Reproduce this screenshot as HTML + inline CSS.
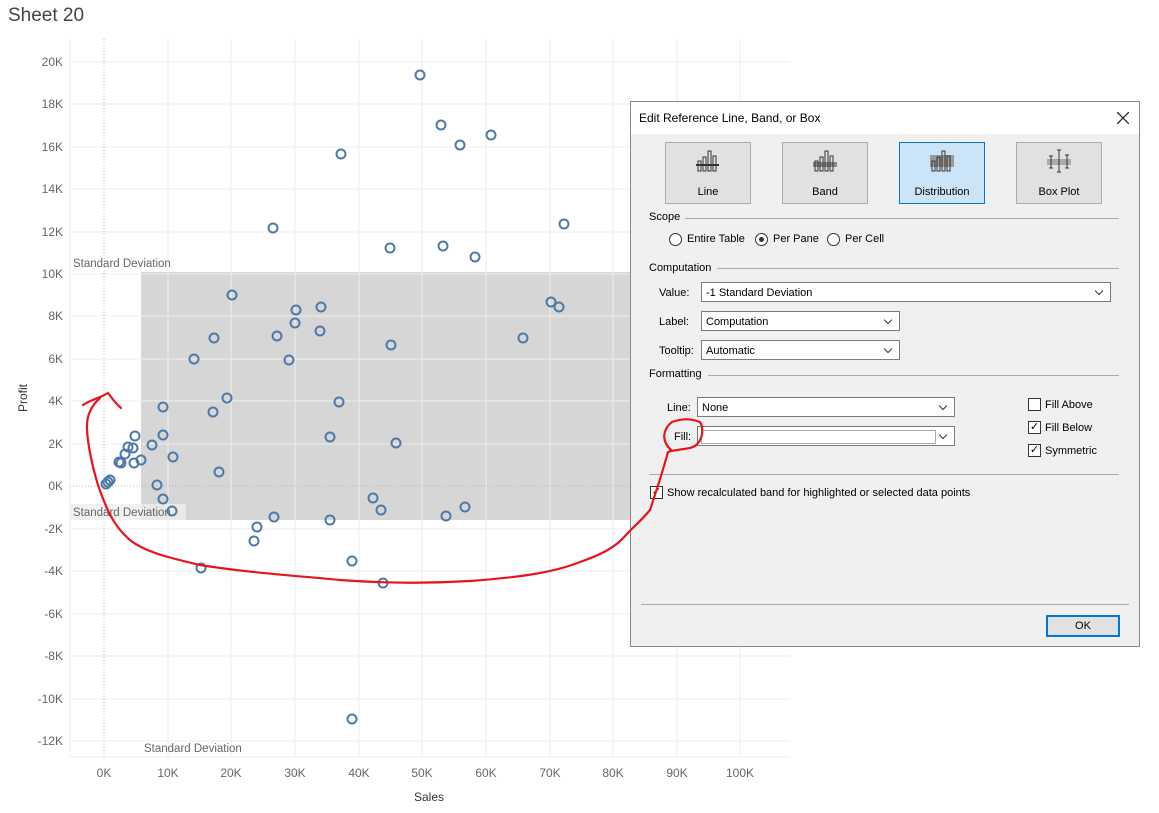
<!DOCTYPE html>
<html><head><meta charset="utf-8"><style>
body{margin:0;width:1159px;height:813px;background:#fff;overflow:hidden;position:relative;font-family:"Liberation Sans",sans-serif}
.t{position:absolute;left:8px;top:5px;font-size:19px;color:#444}
.dlg{position:absolute;left:630px;top:101px;width:508px;height:544px;background:#f0f0f0;border:1px solid #888;font-size:11px;color:#000}
.tb{height:32px;background:#fff;line-height:32px;padding-left:8px;font-size:12px;position:relative}
.x{position:absolute;right:10px;top:10px}
.btn{position:absolute;top:40px;width:84px;height:60px;background:#e1e1e1;border:1px solid #adadad;text-align:center;font-size:11px}
.btn.s{background:#cce4f7;border-color:#0078d7}
.btn span{position:absolute;left:0;right:0;top:43px}
.sec{position:absolute;left:18px;font-size:11px}
.hr{position:absolute;height:1px;background:#aaa}
.lab{position:absolute;font-size:11px}
.sel{position:absolute;background:#fff;border:1px solid #7a7a7a;height:20px;line-height:20px;padding-left:4px;box-sizing:border-box;font-size:11px}
.sel:after{content:"";position:absolute;right:8px;top:5px;width:5px;height:5px;border-right:1px solid #333;border-bottom:1px solid #333;transform:rotate(45deg)}
.rad{position:absolute;width:11px;height:11px;border:1px solid #333;border-radius:50%;background:#fff}
.cb{position:absolute;width:11px;height:11px;border:1px solid #333;background:#fff;font-size:11px;line-height:11px;text-align:center}
</style></head><body>
<div class="t">Sheet 20</div>
<svg width="1159" height="813" style="position:absolute;left:0;top:0" font-family="Liberation Sans, sans-serif">
<rect x="141" y="272" width="500" height="248" fill="#d6d6d6"/>
<g stroke="#eee" stroke-width="1">
<line x1="70" y1="62" x2="790" y2="62"/><line x1="70" y1="104" x2="790" y2="104"/><line x1="70" y1="147" x2="790" y2="147"/><line x1="70" y1="189" x2="790" y2="189"/><line x1="70" y1="232" x2="790" y2="232"/><line x1="70" y1="274" x2="790" y2="274"/><line x1="70" y1="316" x2="790" y2="316"/><line x1="70" y1="359" x2="790" y2="359"/><line x1="70" y1="401" x2="790" y2="401"/><line x1="70" y1="444" x2="790" y2="444"/><line x1="70" y1="529" x2="790" y2="529"/><line x1="70" y1="571" x2="790" y2="571"/><line x1="70" y1="614" x2="790" y2="614"/><line x1="70" y1="656" x2="790" y2="656"/><line x1="70" y1="699" x2="790" y2="699"/><line x1="70" y1="741" x2="790" y2="741"/>
<line x1="168" y1="39" x2="168" y2="757"/><line x1="231" y1="39" x2="231" y2="757"/><line x1="295" y1="39" x2="295" y2="757"/><line x1="359" y1="39" x2="359" y2="757"/><line x1="422" y1="39" x2="422" y2="757"/><line x1="486" y1="39" x2="486" y2="757"/><line x1="550" y1="39" x2="550" y2="757"/><line x1="613" y1="39" x2="613" y2="757"/><line x1="677" y1="39" x2="677" y2="757"/><line x1="740" y1="39" x2="740" y2="757"/>
<line x1="70" y1="39" x2="70" y2="757"/><line x1="70" y1="757" x2="790" y2="757"/>
</g>
<line x1="104" y1="39" x2="104" y2="757" stroke="#bbb" stroke-dasharray="1,2"/>
<line x1="70" y1="486" x2="790" y2="486" stroke="#bbb" stroke-dasharray="1,2"/>
<g fill="#666" font-size="12" text-anchor="end">
<text x="63" y="66">20K</text><text x="63" y="108">18K</text><text x="63" y="151">16K</text><text x="63" y="193">14K</text><text x="63" y="236">12K</text><text x="63" y="278">10K</text><text x="63" y="320">8K</text><text x="63" y="363">6K</text><text x="63" y="405">4K</text><text x="63" y="448">2K</text><text x="63" y="490">0K</text><text x="63" y="533">-2K</text><text x="63" y="575">-4K</text><text x="63" y="618">-6K</text><text x="63" y="660">-8K</text><text x="63" y="703">-10K</text><text x="63" y="745">-12K</text>
</g>
<g fill="#666" font-size="12" text-anchor="middle">
<text x="104" y="777">0K</text><text x="168" y="777">10K</text><text x="231" y="777">20K</text><text x="295" y="777">30K</text><text x="359" y="777">40K</text><text x="422" y="777">50K</text><text x="486" y="777">60K</text><text x="550" y="777">70K</text><text x="613" y="777">80K</text><text x="677" y="777">90K</text><text x="740" y="777">100K</text>
</g>
<text x="429" y="801" font-size="12" fill="#333" text-anchor="middle">Sales</text>
<text x="27" y="398" font-size="12" fill="#333" transform="rotate(-90 27 398)" text-anchor="middle">Profit</text>
<rect x="70" y="504" width="116" height="16" fill="#eee" opacity=".8"/>
<g fill="#666" font-size="11.5"><text x="73" y="267">Standard Deviation</text><text x="73" y="516">Standard Deviation</text><text x="144" y="752">Standard Deviation</text></g>
<g fill="none" stroke="#4e79a7" stroke-width="2">
<circle cx="420" cy="75" r="4.5"/><circle cx="441" cy="125" r="4.5"/><circle cx="491" cy="135" r="4.5"/><circle cx="460" cy="145" r="4.5"/><circle cx="341" cy="154" r="4.5"/><circle cx="273" cy="228" r="4.5"/><circle cx="564" cy="224" r="4.5"/><circle cx="390" cy="248" r="4.5"/><circle cx="443" cy="246" r="4.5"/><circle cx="475" cy="257" r="4.5"/><circle cx="232" cy="295" r="4.5"/><circle cx="296" cy="310" r="4.5"/><circle cx="321" cy="307" r="4.5"/><circle cx="551" cy="302" r="4.5"/><circle cx="559" cy="307" r="4.5"/><circle cx="214" cy="338" r="4.5"/><circle cx="295" cy="323" r="4.5"/><circle cx="277" cy="336" r="4.5"/><circle cx="320" cy="331" r="4.5"/><circle cx="194" cy="359" r="4.5"/><circle cx="289" cy="360" r="4.5"/><circle cx="391" cy="345" r="4.5"/><circle cx="523" cy="338" r="4.5"/><circle cx="227" cy="398" r="4.5"/><circle cx="163" cy="407" r="4.5"/><circle cx="339" cy="402" r="4.5"/><circle cx="213" cy="412" r="4.5"/><circle cx="135" cy="436" r="4.5"/><circle cx="163" cy="435" r="4.5"/><circle cx="330" cy="437" r="4.5"/><circle cx="396" cy="443" r="4.5"/><circle cx="152" cy="445" r="4.5"/><circle cx="128" cy="447" r="4.5"/><circle cx="133" cy="448" r="4.5"/><circle cx="125" cy="454" r="4.5"/><circle cx="119" cy="462" r="4.5"/><circle cx="121" cy="463" r="4.5"/><circle cx="141" cy="460" r="4.5"/><circle cx="134" cy="463" r="4.5"/><circle cx="173" cy="457" r="4.5"/><circle cx="219" cy="472" r="4.5"/><circle cx="110" cy="480" r="4.5"/><circle cx="108" cy="482" r="4.5"/><circle cx="106" cy="484" r="4.5"/><circle cx="157" cy="485" r="4.5"/><circle cx="163" cy="499" r="4.5"/><circle cx="172" cy="511" r="4.5"/><circle cx="373" cy="498" r="4.5"/><circle cx="465" cy="507" r="4.5"/><circle cx="381" cy="510" r="4.5"/><circle cx="274" cy="517" r="4.5"/><circle cx="330" cy="520" r="4.5"/><circle cx="446" cy="516" r="4.5"/><circle cx="257" cy="527" r="4.5"/><circle cx="254" cy="541" r="4.5"/><circle cx="352" cy="561" r="4.5"/><circle cx="201" cy="568" r="4.5"/><circle cx="383" cy="583" r="4.5"/><circle cx="352" cy="719" r="4.5"/>
</g>
</svg>
<div class="dlg">
<div class="tb">Edit Reference Line, Band, or Box<svg class="x" width="12" height="12"><path d="M0,0L12,12M12,0L0,12" stroke="#222" stroke-width="1.2"/></svg></div>
<div class="btn" style="left:34px"><svg width="84" height="40"><g fill="none" stroke="#333"><rect x="32" y="18" width="3" height="10"/><rect x="37" y="14" width="3" height="14"/><rect x="42" y="8" width="3" height="20"/><rect x="47" y="13" width="3" height="15"/><line x1="30" y1="22" x2="53" y2="22" stroke-width="2"/></g></svg><span>Line</span></div>
<div class="btn" style="left:151px"><svg width="84" height="40"><rect x="30" y="19" width="24" height="5" fill="#888"/><g fill="none" stroke="#333"><rect x="32" y="18" width="3" height="10"/><rect x="37" y="14" width="3" height="14"/><rect x="42" y="8" width="3" height="20"/><rect x="47" y="13" width="3" height="15"/></g></svg><span>Band</span></div>
<div class="btn s" style="left:268px"><svg width="84" height="40"><rect x="30" y="12" width="24" height="12" fill="#999"/><g fill="none" stroke="#333"><rect x="32" y="18" width="3" height="10"/><rect x="37" y="14" width="3" height="14"/><rect x="42" y="8" width="3" height="20"/><rect x="47" y="13" width="3" height="15"/></g></svg><span>Distribution</span></div>
<div class="btn" style="left:385px"><svg width="84" height="40"><rect x="30" y="16" width="24" height="6" fill="#aaa"/><g stroke="#333"><line x1="34" y1="13" x2="34" y2="25"/><line x1="42" y1="7" x2="42" y2="29"/><line x1="50" y1="12" x2="50" y2="25"/><line x1="32" y1="13" x2="36" y2="13"/><line x1="32" y1="25" x2="36" y2="25"/><line x1="40" y1="7" x2="44" y2="7"/><line x1="40" y1="29" x2="44" y2="29"/><line x1="48" y1="12" x2="52" y2="12"/><line x1="48" y1="25" x2="52" y2="25"/></g></svg><span>Box Plot</span></div>
<div class="sec" style="top:109px">Scope</div><div class="hr" style="left:54px;right:20px;top:116px"></div>
<div class="rad" style="left:38px;top:131px"></div><div class="lab" style="left:56px;top:131px">Entire Table</div>
<div class="rad" style="left:124px;top:131px"><div style="width:5px;height:5px;border-radius:50%;background:#333;margin:3px"></div></div><div class="lab" style="left:142px;top:131px">Per Pane</div>
<div class="rad" style="left:196px;top:131px"></div><div class="lab" style="left:214px;top:131px">Per Cell</div>
<div class="sec" style="top:160px">Computation</div><div class="hr" style="left:86px;right:20px;top:166px"></div>
<div class="lab" style="left:28px;top:185px">Value:</div><div class="sel" style="left:70px;top:180px;width:410px">-1 Standard Deviation</div>
<div class="lab" style="left:28px;top:214px">Label:</div><div class="sel" style="left:70px;top:209px;width:199px">Computation</div>
<div class="lab" style="left:28px;top:243px">Tooltip:</div><div class="sel" style="left:70px;top:238px;width:199px">Automatic</div>
<div class="sec" style="top:266px">Formatting</div><div class="hr" style="left:77px;right:20px;top:273px"></div>
<div class="lab" style="left:36px;top:300px">Line:</div><div class="sel" style="left:66px;top:295px;width:258px">None</div>
<div class="lab" style="left:43px;top:329px">Fill:</div><div class="sel" style="left:66px;top:324px;width:258px"><div style="position:absolute;left:3px;top:3px;width:233px;height:12px;border:1px solid #aaa"></div></div>
<div class="cb" style="left:397px;top:296px"></div><div class="lab" style="left:414px;top:297px">Fill Above</div>
<div class="cb" style="left:397px;top:319px">✓</div><div class="lab" style="left:414px;top:320px">Fill Below</div>
<div class="cb" style="left:397px;top:342px">✓</div><div class="lab" style="left:414px;top:343px">Symmetric</div>
<div class="hr" style="left:18px;right:20px;top:372px"></div>
<div class="cb" style="left:19px;top:384px">✓</div><div class="lab" style="left:36px;top:385px">Show recalculated band for highlighted or selected data points</div>
<div class="hr" style="left:10px;right:10px;top:502px"></div>
<div style="position:absolute;left:415px;top:513px;width:70px;height:18px;border:2px solid #0078d7;background:#e1e1e1;text-align:center;line-height:18px">OK</div>
</div>
<svg width="1159" height="813" style="position:absolute;left:0;top:0" fill="none" stroke="#e8141b" stroke-width="2.2" stroke-linecap="round">
<path d="M671,450 C660,440 664,428 672,422 C680,419 690,418 700,422 C705,430 702,445 690,448 C680,450 672,450 668,452 C663,470 655,495 650,510 C640,522 632,528 626,535 C615,548 600,555 580,562 C550,574 510,578 470,581 C420,584 380,583 340,580 C300,576 250,573 200,565 C170,558 145,552 130,540 C112,525 105,505 98,485 C92,465 88,445 87,430 C86,415 92,405 100,398"/>
<path d="M83,405 C90,400 100,398 108,393 C112,398 115,403 121,408"/>
</svg>
</body></html>
